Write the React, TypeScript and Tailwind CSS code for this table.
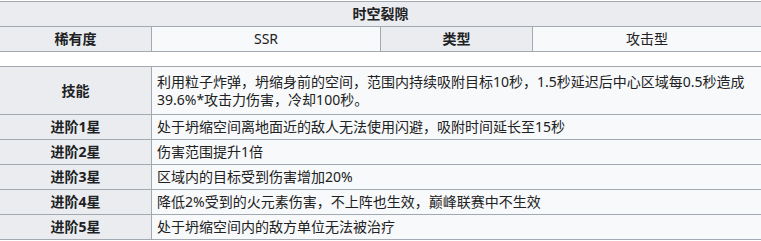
import React from "react";

const FONT = { fontFamily: '"Noto Sans", "Noto Sans CJK SC", sans-serif' };

const rows: { label: string; lines: string[]; tall?: boolean }[] = [
  {
    label: "技能",
    lines: [
      "利用粒子炸弹，坍缩身前的空间，范围内持续吸附目标10秒，1.5秒延迟后中心区域每0.5秒造成",
      "39.6%*攻击力伤害，冷却100秒。",
    ],
    tall: true,
  },
  { label: "进阶1星", lines: ["处于坍缩空间离地面近的敌人无法使用闪避，吸附时间延长至15秒"] },
  { label: "进阶2星", lines: ["伤害范围提升1倍"] },
  { label: "进阶3星", lines: ["区域内的目标受到伤害增加20%"] },
  { label: "进阶4星", lines: ["降低2%受到的火元素伤害，不上阵也生效，巅峰联赛中不生效"] },
  { label: "进阶5星", lines: ["处于坍缩空间内的敌方单位无法被治疗"] },
];

export default function App() {
  return (
    <div className="w-[761px] h-[241px] bg-white text-[14px] text-[#202122] pt-[1px] overflow-hidden" style={FONT}>
      <div className="border-t border-[#a2a9b1]">
        <div className="h-[25px] bg-[#eaecf0] border-b border-[#a2a9b1] flex items-center justify-center font-bold leading-[18px]">
          时空裂隙
        </div>
        <div className="grid grid-cols-[152px_229px_152px_228px] h-[25px] border-b border-[#a2a9b1] leading-[18px]">
          <div className="bg-[#eaecf0] border-r border-[#a2a9b1] flex items-center justify-center font-bold">稀有度</div>
          <div className="bg-[#f8f9fa] border-r border-[#a2a9b1] flex items-center justify-center">SSR</div>
          <div className="bg-[#eaecf0] border-r border-[#a2a9b1] flex items-center justify-center font-bold">类型</div>
          <div className="bg-[#f8f9fa] flex items-center justify-center">攻击型</div>
        </div>
      </div>
      <div className="mt-[14px] border-t border-[#a2a9b1]">
        {rows.map((r) => (
          <div
            key={r.label}
            className={`grid grid-cols-[152px_1fr] border-b border-[#a2a9b1] leading-[18px] ${r.tall ? "h-[48px]" : "h-[25px]"}`}
          >
            <div className="bg-[#eaecf0] border-r border-[#a2a9b1] flex items-center justify-center font-bold">{r.label}</div>
            <div className="bg-[#f8f9fa] flex flex-col justify-center pl-[5px] whitespace-nowrap">
              {r.lines.map((l) => (
                <div key={l}>{l}</div>
              ))}
            </div>
          </div>
        ))}
      </div>
    </div>
  );
}
